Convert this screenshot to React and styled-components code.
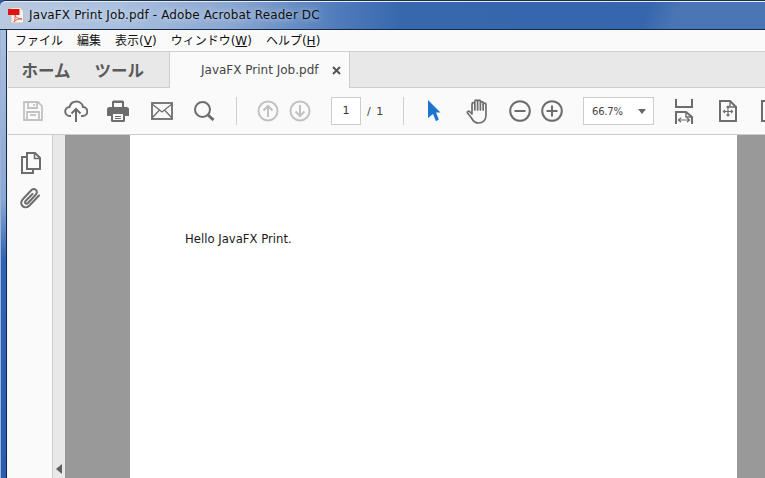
import React from "react";
import styled, { createGlobalStyle } from "styled-components";

const Global = createGlobalStyle`
  html, body { margin: 0; padding: 0; background: #fff; overflow: hidden; }
`;

const UI = `"DejaVu Sans", sans-serif`;
const JP = `"Noto Sans CJK JP", sans-serif`;

const Win = styled.div`
  width: 765px;
  height: 478px;
  display: flex;
  flex-direction: column;
  overflow: hidden;
  background: #2a5aa8;
`;

const TitleBar = styled.div`
  height: 30px;
  flex: none;
  display: flex;
  align-items: center;
  padding-left: 8px;
  box-sizing: border-box;
  border-top: 1px solid #1c2f4e;
  border-bottom: 1px solid #14284a;
  border-radius: 6px 0 0 0;
  box-shadow: inset 0 1px 0 #e4ecf6;
  background:
    linear-gradient(108deg, transparent 84%, rgba(255,255,255,.1) 88%, rgba(255,255,255,.1) 100%),
    linear-gradient(to right, #b9c9e0 0, #a9bfdf 120px, #8aa7d2 230px, #4f7bbb 340px, #3768ae 400px, #3566ad 100%);
`;

const TitleText = styled.span`
  margin-left: 5px;
  font: 12px ${UI};
  letter-spacing: .12px;
  color: #101010;
  text-shadow: 0 0 6px rgba(255,255,255,.8);
`;

const Frame = styled.div`
  flex: 1;
  display: flex;
  min-height: 0;
`;

const FrameEdge = styled.div`
  width: 7px;
  flex: none;
  border-right: 1px solid #14284a;
  box-sizing: border-box;
  background: linear-gradient(to bottom, #a9bfdf 0, #8ba8d3 170px, #2f63b4 230px, #2a5cae 100%);
  box-shadow: inset 1px 0 0 #9db4d6;
`;

const Main = styled.div`
  flex: 1;
  min-width: 0;
  display: flex;
  flex-direction: column;
  background: #fff;
  border-left: 1px solid #f4f4f4;
`;

const MenuBar = styled.div`
  height: 22px;
  flex: none;
  display: flex;
  align-items: center;
  gap: 14px;
  padding-left: 7px;
  background: #fafafa;
  font: 12px/22px "DejaVu Sans", ${JP};
  color: #111;
  box-sizing: border-box;
  border-bottom: 1px solid #d0d0d0;
`;

const TabBar = styled.div`
  height: 36px;
  flex: none;
  display: flex;
  background: #e8e8e8;
  border-bottom: 1px solid #cdcdcd;
  box-sizing: border-box;
`;

const HomeTabs = styled.div`
  width: 161px;
  display: flex;
  gap: 24px;
  align-items: center;
  padding-left: 13.5px;
  box-sizing: border-box;
  font: 700 16.5px ${JP};
  color: #5a5a5a;
`;

const DocTab = styled.div`
  width: 181px;
  height: 36px;
  display: flex;
  align-items: center;
  box-sizing: border-box;
  padding-left: 31px;
  background: #fafafa;
  border: 1px solid #cdcdcd;
  border-width: 0 1px;
  font: 12px ${UI};
  color: #444;
`;

const CloseX = styled.svg`
  margin-left: 14px;
  width: 9px;
  height: 9px;
`;

const Toolbar = styled.div`
  height: 47px;
  flex: none;
  display: flex;
  align-items: center;
  padding-left: 3px;
  background: #fafafa;
  border-bottom: 1px solid #cdcdcd;
  box-sizing: border-box;
  overflow: hidden;
`;

const Slot = styled.div`
  width: ${p => p.$w || 43}px;
  height: 46px;
  flex: none;
  margin-left: ${p => p.$ml || 0}px;
  display: flex;
  align-items: center;
  justify-content: center;
`;

const Divider = styled.div`
  width: 1px;
  height: 28px;
  flex: none;
  margin: 0 ${p => p.$r}px 0 ${p => p.$l}px;
  background: #cfcfcf;
`;

const PageBox = styled.div`
  width: 30px;
  height: 28px;
  flex: none;
  margin-left: 15px;
  box-sizing: border-box;
  border: 1px solid #cdcdcd;
  background: #fff;
  font: 11px/26px ${UI};
  text-align: center;
  color: #333;
`;

const PageTotal = styled.div`
  width: 42px;
  flex: none;
  padding-left: 6px;
  box-sizing: border-box;
  font: 11px ${UI};
  color: #444;
  word-spacing: 2px;
`;

const ZoomBox = styled.div`
  width: 71px;
  height: 28px;
  flex: none;
  margin-left: 15px;
  display: flex;
  align-items: center;
  justify-content: space-between;
  padding: 0 7px 0 8px;
  box-sizing: border-box;
  border: 1px solid #cdcdcd;
  background: #fff;
  font: 10px ${UI};
  letter-spacing: -.2px;
  color: #444;
`;

const Caret = styled.span`
  border: 4px solid transparent;
  border-top: 5px solid #666;
  border-bottom: 0;
`;

const Workspace = styled.div`
  flex: 1;
  min-height: 0;
  display: flex;
`;

const SidePanel = styled.div`
  width: 45px;
  flex: none;
  display: flex;
  flex-direction: column;
  align-items: center;
  gap: 14px;
  padding-top: 17px;
  box-sizing: border-box;
  background: #fafafa;
  border-right: 1px solid #cdcdcd;
`;

const Handle = styled.div`
  width: 12px;
  flex: none;
  display: flex;
  align-items: flex-end;
  justify-content: center;
  padding-bottom: 4px;
  box-sizing: border-box;
  background: #e8e8e8;
`;

const HandleArrow = styled.span`
  border: 5px solid transparent;
  border-right: 6px solid #5f5f5f;
  border-left: 0;
`;

const Viewer = styled.div`
  flex: 1;
  min-width: 0;
  display: flex;
  background: #999;
  padding-left: 65px;
`;

const Page = styled.div`
  width: 607px;
  flex: none;
  background: #fff;
  padding: 97px 0 0 55px;
  box-sizing: border-box;
  font: 11.65px ${UI};
  color: #1a1a1a;
`;

const gray = "#6d6d6d";
const light = "#c2c2c2";

const PdfIcon = () => (
  <svg width="16" height="18" viewBox="0 0 16 18">
    <path d="M3 1.500h9l3.500 3.500v12H3z" fill="#f5f1ee" stroke="#c9c2bd" />
    <rect x="0" y="3" width="11.500" height="6" fill="#e0140e" />
    <path d="M7 9c.500 2 2 3.500 7 4-3-.500-6 .500-8 3 1-2 1.500-4.500 1-7z" fill="none" stroke="#e0584c" strokeWidth="1" />
  </svg>
);

const SaveIcon = () => (
  <svg width="20" height="20" viewBox="0 0 20 20" fill="none" stroke={light} strokeWidth="1.800">
    <path d="M1 1h14l4 4v14H1z" />
    <path d="M5 1v6h9V1M11 3v2" />
    <path d="M4 19v-8h12v8" />
    <path d="M7 14h6" />
  </svg>
);

const CloudIcon = () => (
  <svg width="24" height="23" viewBox="0 0 24 23" fill="none" stroke={gray} strokeWidth="2">
    <path d="M7 16H6a4.500 4.500 0 0 1-.500-9C6.500 3.500 9.500 1.500 12.500 1.500c3.500 0 6 2.500 6.500 5.500a4.500 4.500 0 0 1-.500 9H17" />
    <path d="M12 22V9M7.500 13.500 12 9l4.500 4.500" />
  </svg>
);

const PrintIcon = () => (
  <svg width="24" height="22" viewBox="0 0 24 22">
    <path d="M5 7V2a1.500 1.500 0 0 1 1.500-1.500h9A1.500 1.500 0 0 1 17 2v5h-2V3H7v4z" fill={gray} />
    <path d="M2.500 7h17A2.500 2.500 0 0 1 22 9.500V16h-4v-4H4v4H0V9.500A2.500 2.500 0 0 1 2.500 7z" fill={gray} />
    <path d="M4 12h14v8.500a1.500 1.500 0 0 1-1.500 1.500h-11A1.500 1.500 0 0 1 4 20.500z" fill={gray} />
    <path d="M6 14h10v6H6z" fill="#fafafa" />
    <path d="M8 16h6v1H8zM8 18h6v1H8z" fill={gray} />
  </svg>
);

const MailIcon = () => (
  <svg width="22" height="18" viewBox="0 0 22 18" fill="none" stroke={gray} strokeWidth="1.800">
    <rect x="1" y="1" width="20" height="16" />
    <path d="M1 2l10 8 10-8M1 16l7.500-8M21 16l-7.500-8" strokeWidth="1.300" />
  </svg>
);

const SearchIcon = () => (
  <svg width="21" height="20" viewBox="0 0 21 20" fill="none" stroke={gray}>
    <circle cx="8.500" cy="8.500" r="7.500" strokeWidth="2" />
    <path d="M14 14l5.500 5" strokeWidth="3" />
  </svg>
);

const ArrowCircle = ({ down }) => (
  <svg width="22" height="22" viewBox="0 0 22 22" fill="none" stroke={light} strokeWidth="2">
    <circle cx="11" cy="11" r="9.500" />
    <path d={down ? "M11 5v11M6.500 11.500 11 16l4.500-4.500" : "M11 17V6M6.500 10.500 11 6l4.500 4.500"} />
  </svg>
);

const CursorIcon = () => (
  <svg width="13" height="22" viewBox="0 0 13 22">
    <path d="M0 0l12.500 12.500H8l2.800 7-2.800 1.800L5 14l-5 4z" fill="#1b75d0" />
  </svg>
);

const HandIcon = () => (
  <svg width="23" height="25" viewBox="0 0 23 25" fill="none" stroke={gray} strokeWidth="1.700" strokeLinecap="round" strokeLinejoin="round">
    <path d="M6 14V5a1.400 1.400 0 0 1 2.800 0v6M8.800 11V2.500a1.400 1.400 0 0 1 2.800 0V11M11.600 11V2.500a1.400 1.400 0 0 1 2.800 0V11M14.400 11V4a1.400 1.400 0 0 1 2.800 0v7" />
    <path d="M17.200 5.500a1.400 1.400 0 0 1 2.800 0V16c0 5-3 8-7.500 8-4 0-5.500-2-7-5L1.500 14c-.8-1.300 1.200-2.500 2.300-1.300L6 15" />
  </svg>
);

const ZoomCircle = ({ plus }) => (
  <svg width="22" height="22" viewBox="0 0 22 22" fill="none" stroke={gray} strokeWidth="2">
    <circle cx="11" cy="11" r="9.800" />
    <path d={plus ? "M5.500 11h11M11 5.500v11" : "M5.500 11h11"} />
  </svg>
);

const FitWidthIcon = () => (
  <svg width="18" height="25" viewBox="0 0 18 25" fill="none" stroke={gray} strokeWidth="2">
    <path d="M1 0v8h16V0" />
    <path d="M1 25V13h10l6 5v7" />
    <path d="M11 13v5h6" strokeWidth="1.400" />
    <path d="M3.500 21h11M6 18.800 3.500 21 6 23.200M12 18.800l2.500 2.200-2.500 2.200" strokeWidth="1.200" />
  </svg>
);

const FitPageIcon = () => (
  <svg width="18" height="22" viewBox="0 0 18 22" fill="none" stroke={gray} strokeWidth="2">
    <path d="M1 1h10l6 6v14H1z" />
    <path d="M11 1v6h6" strokeWidth="1.400" />
    <path d="M9 6v10M4.500 11.500h9M7.500 7.500 9 6l1.500 1.500M7.500 14.500 9 16l1.500-1.500M6 10l-1.500 1.500L6 13M12 10l1.500 1.500L12 13" strokeWidth="1.200" />
  </svg>
);

const NextIcon = () => (
  <svg width="18" height="22" viewBox="0 0 18 22" fill="none" stroke={gray} strokeWidth="2">
    <path d="M1 1h10l6 6v14H1z" />
  </svg>
);

const PagesIcon = () => (
  <svg width="22" height="22" viewBox="-2 0 22 22" fill="none" stroke={gray} strokeWidth="2">
    <path d="M6 1h8l5 5v11H6z" />
    <path d="M13.500 1v5.500H19" strokeWidth="1.500" />
    <path d="M6 5H1v16h11v-4" />
  </svg>
);

const ClipIcon = () => (
  <svg width="21" height="21" viewBox="0 0 21 21" fill="none" stroke={gray} strokeWidth="2" strokeLinecap="round">
    <path d="M19 7.500 9.500 17.500c-2 2-5 2.500-7 .5s-1.500-5 .5-7L11 2.500c1.500-1.500 3.700-1.700 5-.5s1 3.500-.5 5l-7.500 8c-.8.800-2 .9-2.600.3s-.4-1.700.4-2.500L12.500 6" />
  </svg>
);

const Key = styled.span`
  text-decoration: underline;
`;

const menus = [
  { label: "ファイル" },
  { label: "編集" },
  { label: "表示", key: "V" },
  { label: "ウィンドウ", key: "W" },
  { label: "ヘルプ", key: "H" },
];

const App = () => (
  <Win>
    <Global />
    <TitleBar>
      <PdfIcon />
      <TitleText>JavaFX Print Job.pdf - Adobe Acrobat Reader DC</TitleText>
    </TitleBar>
    <Frame>
      <FrameEdge />
      <Main>
        <MenuBar>
          {menus.map(m => (
            <span key={m.label}>
              {m.label}
              {m.key && <>(<Key>{m.key}</Key>)</>}
            </span>
          ))}
        </MenuBar>
        <TabBar>
          <HomeTabs>
            <span>ホーム</span>
            <span>ツール</span>
          </HomeTabs>
          <DocTab>
            JavaFX Print Job.pdf
            <CloseX viewBox="0 0 9 9">
              <path d="M1 1l7 7M8 1l-7 7" stroke="#555" strokeWidth="2" />
            </CloseX>
          </DocTab>
        </TabBar>
        <Toolbar>
          <Slot><SaveIcon /></Slot>
          <Slot><CloudIcon /></Slot>
          <Slot><PrintIcon /></Slot>
          <Slot><MailIcon /></Slot>
          <Slot><SearchIcon /></Slot>
          <Divider $l={10} $r={15} />
          <Slot $w={32}><ArrowCircle /></Slot>
          <Slot $w={32}><ArrowCircle down /></Slot>
          <PageBox>1</PageBox>
          <PageTotal>/ 1</PageTotal>
          <Divider $l={0} $r={9} />
          <Slot><CursorIcon /></Slot>
          <Slot><HandIcon /></Slot>
          <Slot $w={32} $ml={5}><ZoomCircle /></Slot>
          <Slot $w={32}><ZoomCircle plus /></Slot>
          <ZoomBox>66.7%<Caret /></ZoomBox>
          <Slot $w={60}><FitWidthIcon /></Slot>
          <Slot $w={28}><FitPageIcon /></Slot>
          <Slot $w={56}><NextIcon /></Slot>
        </Toolbar>
        <Workspace>
          <SidePanel>
            <PagesIcon />
            <ClipIcon />
          </SidePanel>
          <Handle><HandleArrow /></Handle>
          <Viewer>
            <Page>Hello JavaFX Print.</Page>
          </Viewer>
        </Workspace>
      </Main>
    </Frame>
  </Win>
);

export default App;
